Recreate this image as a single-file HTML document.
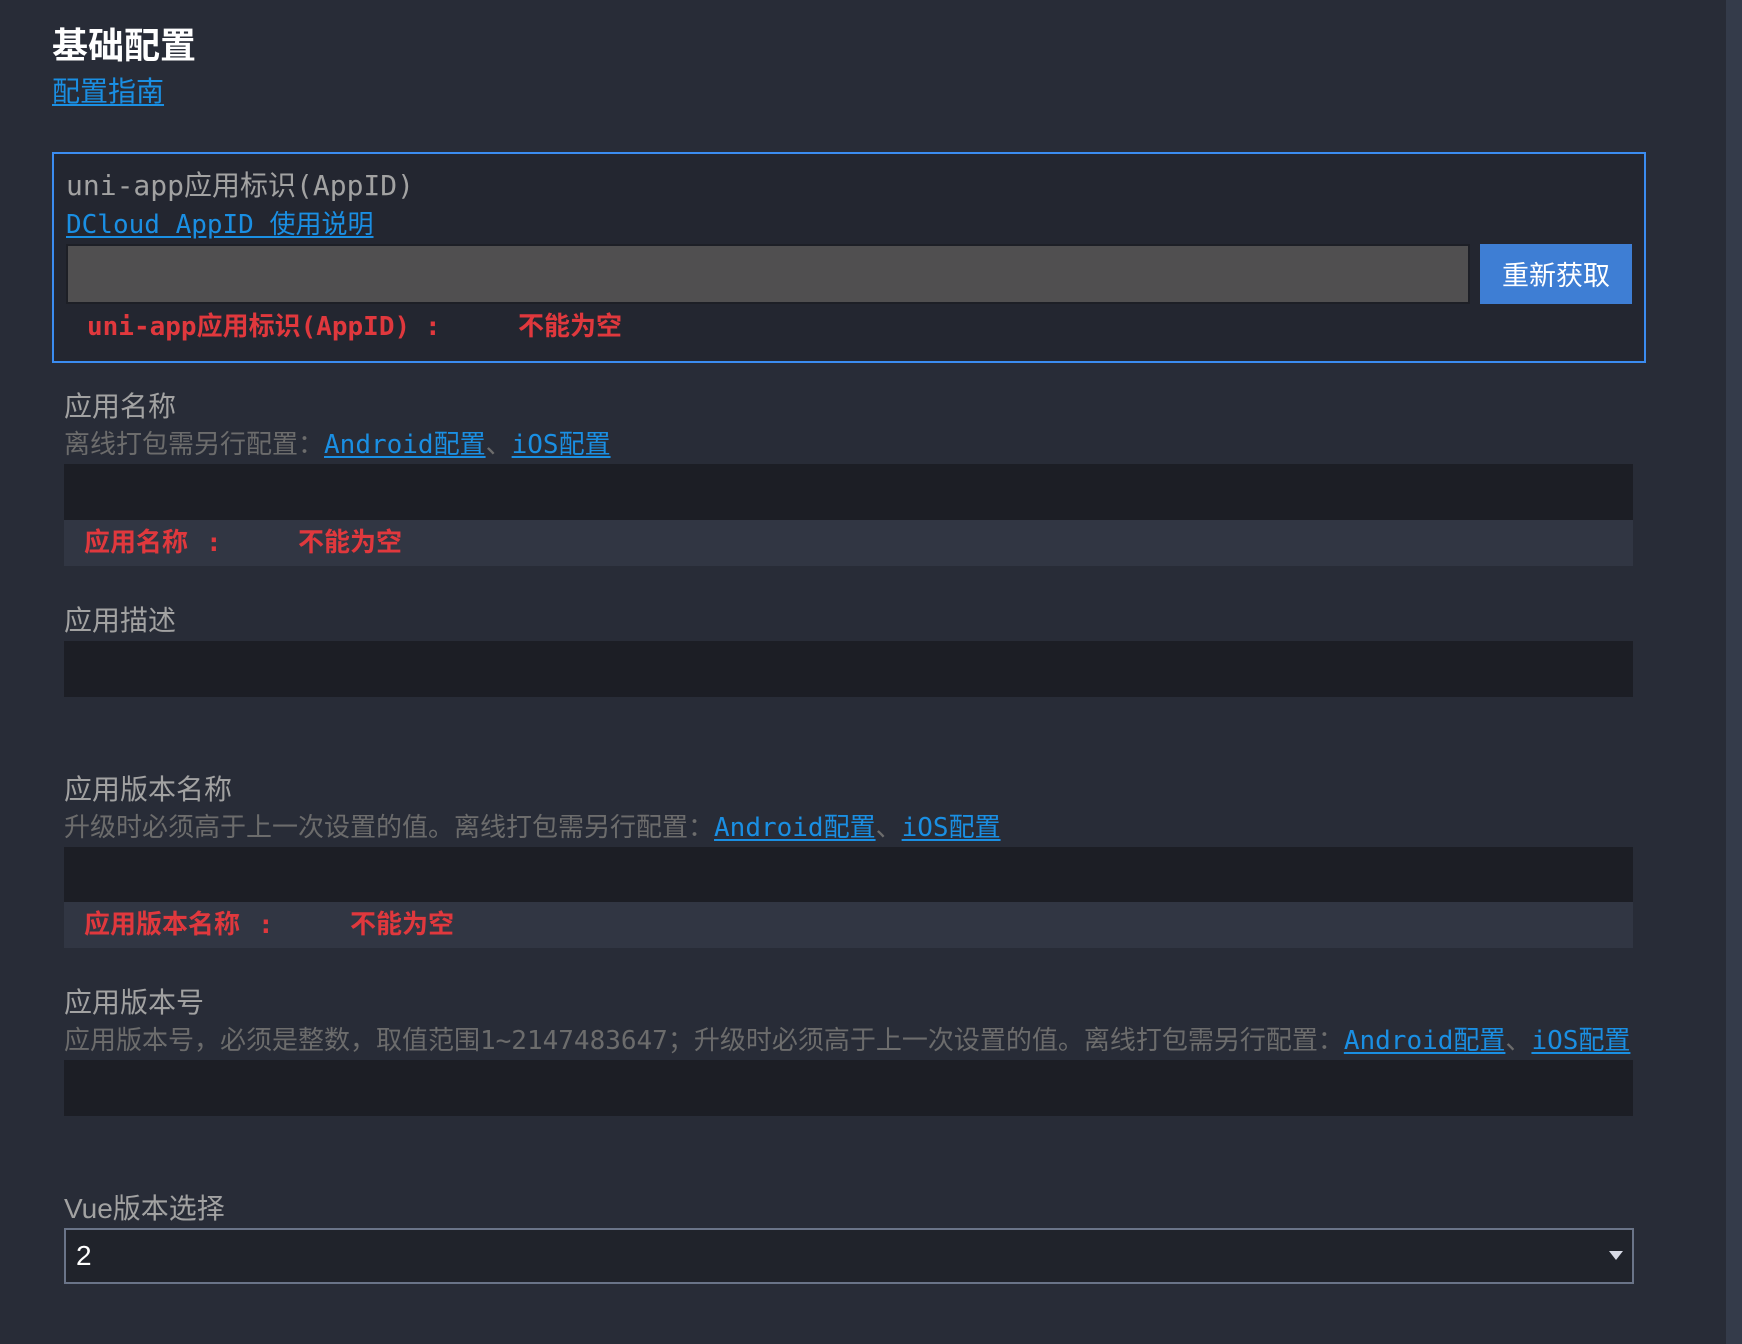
<!DOCTYPE html>
<html><head><meta charset="utf-8"><style>
*{margin:0;padding:0;box-sizing:border-box}
body{width:1742px;height:1344px;background:#282c37;position:relative;overflow:hidden;font-family:"DejaVu Sans Mono","Noto Sans CJK SC",monospace;}
.a{position:absolute;white-space:nowrap}
.t{font-family:"Liberation Sans","Noto Sans CJK SC",sans-serif;font-weight:bold;font-size:36px;color:#fff;line-height:42px}
.lbl{font-size:28px;color:#a2a2a2;line-height:34px}
.sub{font-size:26px;color:#6c6c6c;line-height:32px}
.err{font-size:26px;color:#e0383d;font-weight:bold;line-height:32px}
.lk{color:#1a8fe3;text-decoration:underline;text-underline-offset:3px}
.inp{position:absolute;left:64px;width:1569px;background:#1c1e25}
.eb{position:absolute;left:64px;width:1569px;background:#313643}
</style></head><body>
<div class="a t" style="left:52px;top:25px">基础配置</div>
<div class="a lbl lk" style="left:52px;top:75px">配置指南</div>

<div style="position:absolute;left:52px;top:152px;width:1594px;height:211px;border:2px solid #3b8cf0;background:#232630"></div>
<div class="a lbl" style="left:66px;top:169px">uni-app应用标识(AppID)</div>
<div class="a lbl lk" style="left:66px;top:208px;font-size:26px">DCloud AppID 使用说明</div>
<div style="position:absolute;left:66px;top:244px;width:1404px;height:60px;background:#504f50;border:2px solid #1d1f26"></div>
<div style="position:absolute;left:1480px;top:244px;width:152px;height:60px;background:#3e7ed4;color:#fff;font-family:'Noto Sans CJK SC',sans-serif;font-size:27px;line-height:60px;text-align:center">重新获取</div>
<div class="a err" style="left:87px;top:311px">uni-app应用标识(AppID)</div>
<div class="a err" style="left:425px;top:311px">:</div>
<div class="a err" style="left:518px;top:311px">不能为空</div>

<div class="a lbl" style="left:64px;top:390px">应用名称</div>
<div class="a sub" style="left:64px;top:429px">离线打包需另行配置：<span class="lk">Android配置</span>、<span class="lk">iOS配置</span></div>
<div class="inp" style="top:464px;height:56px"></div>
<div class="eb" style="top:520px;height:46px"></div>
<div class="a err" style="left:84px;top:527px">应用名称</div>
<div class="a err" style="left:206px;top:527px">:</div>
<div class="a err" style="left:298px;top:527px">不能为空</div>

<div class="a lbl" style="left:64px;top:604px">应用描述</div>
<div class="inp" style="top:641px;height:56px"></div>

<div class="a lbl" style="left:64px;top:773px">应用版本名称</div>
<div class="a sub" style="left:64px;top:812px">升级时必须高于上一次设置的值。离线打包需另行配置：<span class="lk">Android配置</span>、<span class="lk">iOS配置</span></div>
<div class="inp" style="top:847px;height:55px"></div>
<div class="eb" style="top:902px;height:46px"></div>
<div class="a err" style="left:84px;top:909px">应用版本名称</div>
<div class="a err" style="left:258px;top:909px">:</div>
<div class="a err" style="left:350px;top:909px">不能为空</div>

<div class="a lbl" style="left:64px;top:986px">应用版本号</div>
<div class="a sub" style="left:64px;top:1025px">应用版本号，必须是整数，取值范围1~2147483647；升级时必须高于上一次设置的值。离线打包需另行配置：<span class="lk">Android配置</span>、<span class="lk">iOS配置</span></div>
<div class="inp" style="top:1060px;height:56px"></div>

<div class="a lbl" style="left:64px;top:1192px;font-family:'Liberation Sans','Noto Sans CJK SC',sans-serif">Vue版本选择</div>
<div style="position:absolute;left:64px;top:1228px;width:1570px;height:56px;border:2px solid #6a7488;background:#20232b"></div>
<div class="a" style="left:76px;top:1240px;font-family:'Liberation Sans',sans-serif;font-size:28px;color:#fff;line-height:32px">2</div>
<div style="position:absolute;left:1609px;top:1251px;width:0;height:0;border-left:7px solid transparent;border-right:7px solid transparent;border-top:9px solid #d8dbe6"></div>

<div style="position:absolute;left:1726px;top:0;width:16px;height:1344px;background:#343b4a"></div>
</body></html>
